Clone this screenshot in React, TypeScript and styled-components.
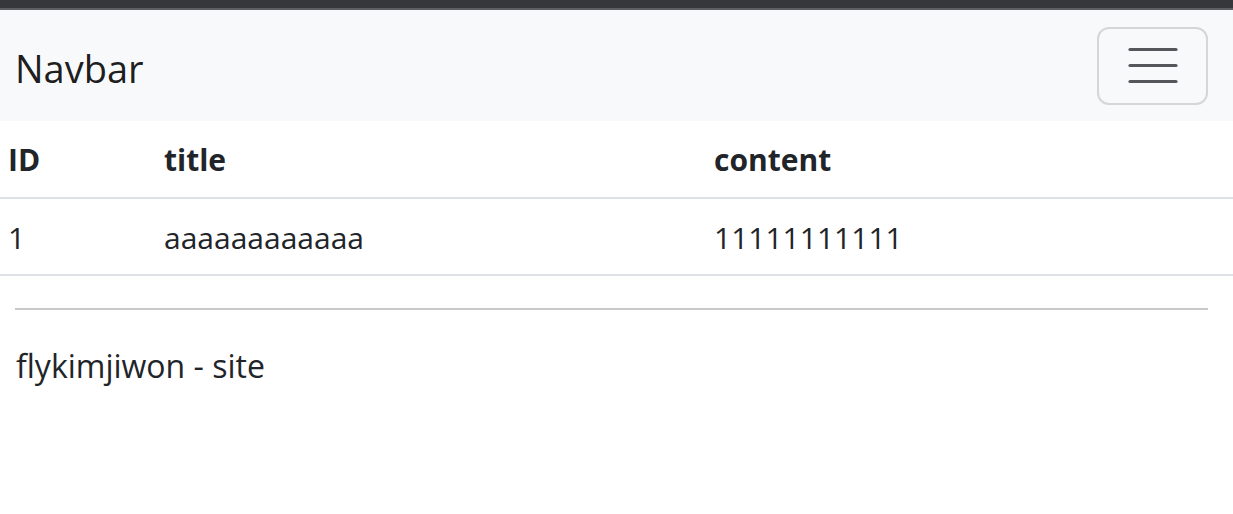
import React from "react";
import styled, { createGlobalStyle } from "styled-components";

const Global = createGlobalStyle`
  html, body { margin: 0; padding: 0; background: #fff; }
  body {
    font-family: "Open Sans", "Noto Sans", sans-serif;
    color: #212529;
    -webkit-font-smoothing: antialiased;
  }
`;

const Chrome = styled.div`
  height: 8px;
  background: #36373b;
  border-bottom: 2px solid #5d5e62;
`;

const Nav = styled.nav`
  height: 111px;
  box-sizing: border-box;
  background: #f8f9fa;
  display: flex;
  align-items: center;
  justify-content: space-between;
  padding: 0 25px 0 15px;
`;

const Brand = styled.a`
  font-size: 38px;
  font-weight: 400;
  color: rgba(0, 0, 0, 0.9);
  text-decoration: none;
  line-height: 1;
  margin-top: 4px;
`;

const Toggler = styled.button`
  width: 111px;
  height: 78px;
  box-sizing: border-box;
  border: 2px solid #d5d6d7;
  border-radius: 12px;
  background: transparent;
  display: flex;
  align-items: center;
  justify-content: center;
  padding: 0;
`;

const Table = styled.table`
  width: 100%;
  border-collapse: collapse;
  table-layout: fixed;
`;

const Th = styled.th<{ $w?: number }>`
  text-align: left;
  font-weight: 700;
  font-size: 30px;
  line-height: 45px;
  padding: 16px 8px 15px;
  border-bottom: 2px solid #dee2e6;
  width: ${(p) => (p.$w ? `${p.$w}px` : "auto")};
`;

const Td = styled.td`
  font-size: 30px;
  line-height: 45px;
  padding: 16px 8px 14px;
  border-bottom: 2px solid #dee2e6;
`;

const Footer = styled.footer`
  padding: 32px 25px 0 15px;
`;

const Rule = styled.hr`
  margin: 0;
  border: 0;
  border-top: 2px solid #c8c9ca;
`;

const FooterText = styled.p`
  margin: 32px 0 0 1px;
  font-size: 32px;
  line-height: 48px;
  color: #212529;
`;

export default function App() {
  return (
    <>
      <Global />
      <Chrome />
      <Nav>
        <Brand href="#">Navbar</Brand>
        <Toggler aria-label="Toggle navigation">
          <svg width="50" height="40" viewBox="0 0 50 40">
            <g stroke="#55565a" strokeWidth="3.2" strokeLinecap="round">
              <line x1="2" y1="3.5" x2="48" y2="3.5" />
              <line x1="2" y1="19.5" x2="48" y2="19.5" />
              <line x1="2" y1="35.5" x2="48" y2="35.5" />
            </g>
          </svg>
        </Toggler>
      </Nav>
      <Table>
        <thead>
          <tr>
            <Th $w={140}>ID</Th>
            <Th $w={534}>title</Th>
            <Th>content</Th>
          </tr>
        </thead>
        <tbody>
          <tr>
            <Td>1</Td>
            <Td>aaaaaaaaaaaa</Td>
            <Td>11111111111</Td>
          </tr>
        </tbody>
      </Table>
      <Footer>
        <Rule />
        <FooterText>flykimjiwon - site</FooterText>
      </Footer>
    </>
  );
}
